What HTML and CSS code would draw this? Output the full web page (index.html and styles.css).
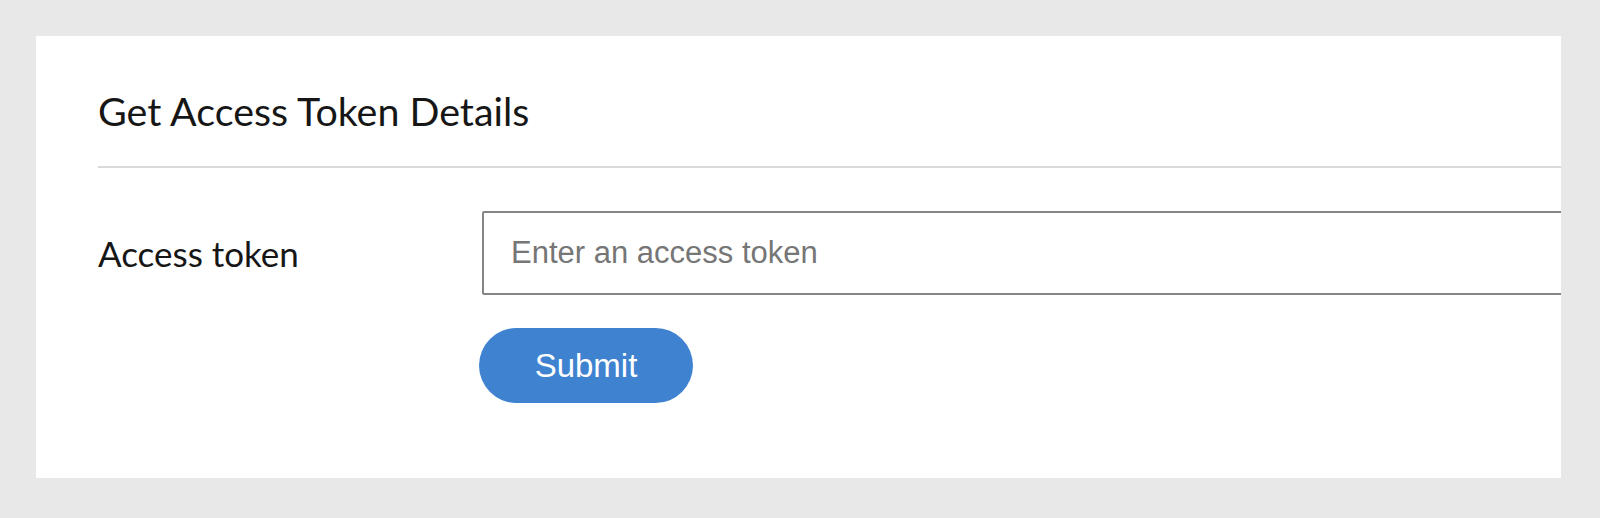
FILE: index.html
```html
<!DOCTYPE html>
<html lang="en">
<head>
<meta charset="utf-8">
<title>Get Access Token Details</title>
<link rel="stylesheet" href="styles.css">
</head>
<body>
<main class="card">
  <h1 class="title">Get Access Token Details</h1>
  <hr class="divider">
  <form class="form">
    <label class="label" for="token">Access token</label>
    <div class="field">
      <input id="token" class="input" type="text" placeholder="Enter an access token">
      <button type="button" class="submit">Submit</button>
    </div>
  </form>
</main>
</body>
</html>
```

FILE: styles.css
```css
html, body {
  margin: 0;
  padding: 0;
}
body {
  background: #e8e8e8;
  padding: 36px 39px 40px 36px;
  font-family: Lato, "Open Sans", sans-serif;
  color: #1b1b1b;
}
.card {
  background: #ffffff;
  height: 442px;
  box-sizing: border-box;
  padding: 51px 0 0 62px;
  overflow: hidden;
}
.title {
  margin: 0;
  font-size: 39.4px;
  line-height: 48px;
  font-weight: 400;
  color: #161616;
}
.divider {
  margin: 31px 0 0 0;
  border: 0;
  height: 2px;
  background: #d9d9d9;
}
.form {
  margin-top: 43px;
  display: grid;
  grid-template-columns: 384px 1fr;
}
.label {
  font-size: 35px;
  line-height: 84px;
  height: 84px;
  color: #161616;
}
.field {
  display: flex;
  flex-direction: column;
  align-items: flex-start;
  gap: 33px;
  margin-right: -10px;
}
.input {
  box-sizing: border-box;
  width: 100%;
  height: 84px;
  margin: 0;
  padding: 0 0 0 27px;
  border: 2px solid #858585;
  border-radius: 2px;
  font-family: "Liberation Sans", Arial, sans-serif;
  font-size: 31px;
  color: #333;
  background: #fff;
  outline: none;
}
.input::placeholder {
  color: #767676;
}
.submit {
  margin-left: -3px;
  width: 214px;
  height: 75px;
  border: 0;
  border-radius: 38px;
  background: #3e82d0;
  color: #ffffff;
  font-family: "Liberation Sans", Arial, sans-serif;
  font-size: 33px;
  padding: 0;
  cursor: pointer;
}
```
